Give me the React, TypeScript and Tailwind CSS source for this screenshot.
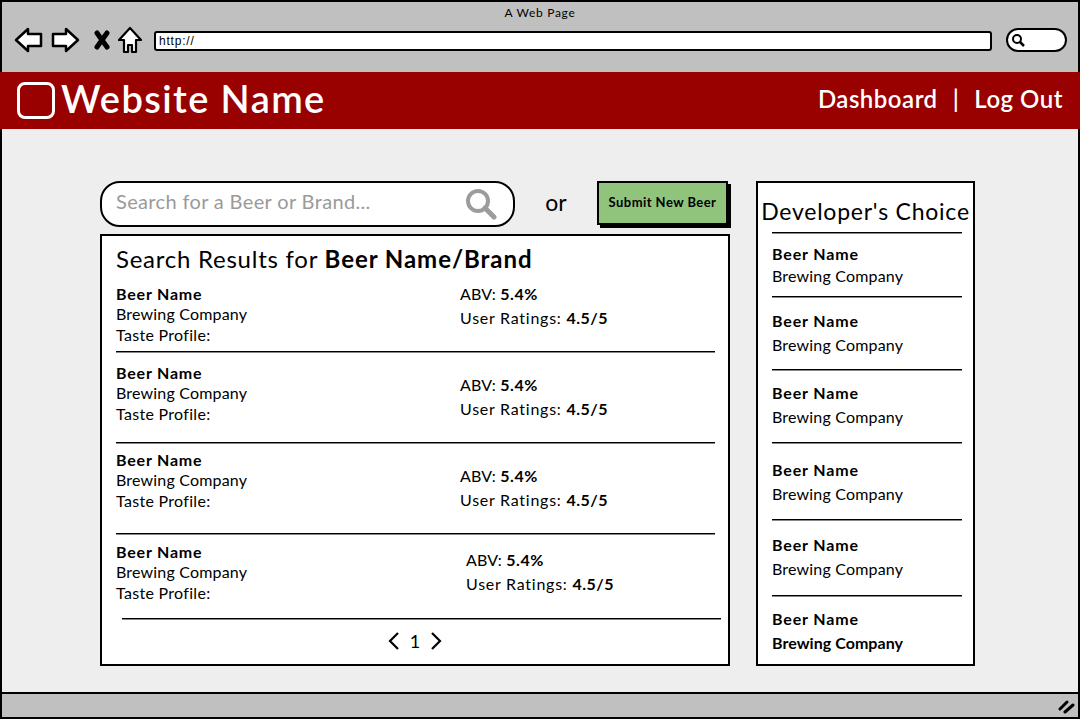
const font = { fontFamily: 'Lato, "Open Sans", sans-serif' };

function BeerRow({ h, pt, rightX, rightPt, line = true, lineX = "ml-[14px] w-[599px]" }: { h: string; pt: string; rightX: string; rightPt: string; line?: boolean; lineX?: string }) {
  return (
    <div className={h + " flex flex-col"}>
      <div className="flex flex-1 min-h-0">
        <div className={pt + " w-[358px] shrink-0 pl-[14px] text-[16px] leading-[20px]"}>
          <div className="font-bold tracking-[0.8px]">Beer Name</div>
          <div className="tracking-[0.18px]">Brewing Company</div>
          <div className="mt-[1px] tracking-[0.3px]">Taste Profile:</div>
        </div>
        <div className={rightPt + " " + rightX + " text-[16px] leading-[20px]"}>
          <div className="tracking-[0.1px]">ABV: <b className="tracking-[0.6px]">5.4%</b></div>
          <div className="mt-[4px] tracking-[0.75px]">User Ratings: <b className="tracking-[0.5px]">4.5/5</b></div>
        </div>
      </div>
      {line && <div className={lineX + " h-[2px] bg-[#888] border-t border-black"} />}
    </div>
  );
}

function Pick({ h, pt, gap, boldCompany = false, line = true }: { h: string; pt: string; gap: string; boldCompany?: boolean; line?: boolean }) {
  return (
    <div className={h + " flex flex-col"}>
      <div className={pt + " flex-1 min-h-0 pl-[14px] text-[16px] leading-[20px]"}>
        <div className="font-bold tracking-[0.85px]">Beer Name</div>
        <div className={gap + (boldCompany ? " font-bold tracking-[0.05px]" : " tracking-[0.18px]")}>Brewing Company</div>
      </div>
      {line && <div className="ml-[14px] w-[190px] h-[2px] bg-[#888] border-t border-black" />}
    </div>
  );
}

export default function App() {
  return (
    <div className="w-[1080px] h-[720px] flex flex-col bg-white text-black overflow-hidden" style={font}>
      <div className="h-[72px] shrink-0 bg-[#c0c0c0] border-t-2 border-x-2 border-black">
        <div className="text-center text-[12px] leading-[16px] pt-[3px] tracking-[0.7px]">A Web Page</div>
        <div className="flex items-center pl-[12px] pr-[11px] mt-[1px] h-[36px]">
          <svg width="30" height="28" viewBox="0 0 30 28" className="shrink-0"><path d="M2 14 L14 3 L14 8 L27 8 L27 20 L14 20 L14 25 Z" fill="#fff" stroke="#000" strokeWidth="2.5" strokeLinejoin="round" /></svg>
          <svg width="30" height="28" viewBox="0 0 30 28" className="shrink-0 ml-[6px]"><path d="M28 14 L16 3 L16 8 L3 8 L3 20 L16 20 L16 25 Z" fill="#fff" stroke="#000" strokeWidth="2.5" strokeLinejoin="round" /></svg>
          <svg width="18" height="20" viewBox="0 0 18 20" className="shrink-0 ml-[13px]"><path d="M4 3 L14 17 M14 3 L4 17" stroke="#000" strokeWidth="5" strokeLinecap="round" /></svg>
          <svg width="24" height="28" viewBox="0 0 24 28" className="shrink-0 ml-[7px]"><path d="M12 2 L23 14 L18 14 L18 26 L14 26 L14 19 L10 19 L10 26 L6 26 L6 14 L1 14 Z" fill="#fff" stroke="#000" strokeWidth="2.2" strokeLinejoin="round" /></svg>
          <div className="ml-[12px] mt-[1px] w-[840px] h-[20px] bg-white border-2 border-black rounded-[3px] flex items-center pl-[3px] text-[12px] tracking-[0.8px]" style={{ fontFamily: '"Liberation Sans", sans-serif' }}>http://</div>
          <div className="ml-[14px] w-[61px] h-[24px] bg-white border-2 border-black rounded-[12px] flex items-center pl-[3px]">
            <svg width="14" height="14" viewBox="0 0 14 14"><circle cx="6" cy="6" r="4" fill="none" stroke="#000" strokeWidth="2" /><path d="M9 9 L13 13" stroke="#000" strokeWidth="2.5" /></svg>
          </div>
        </div>
      </div>
      <div className="h-[57px] shrink-0 bg-[#990000] flex items-center text-white">
        <div className="ml-[17px] w-[38px] h-[37px] border-[3px] border-white rounded-[8px]" />
        <div className="ml-[6px] pb-[5px] text-[38px] leading-[52px] font-semibold tracking-[1.4px]">Website Name</div>
        <div className="ml-auto mr-[17px] pb-[4px] flex items-center text-[24px] font-semibold tracking-[0.5px]">
          <span>Dashboard</span>
          <span className="mx-[15px]">|</span>
          <span>Log Out</span>
        </div>
      </div>
      <div className="flex-1 min-h-0 bg-[#eeeeee] border-x-2 border-black flex pl-[98px] pt-[52px]">
        <div className="w-[630px] shrink-0">
          <div className="flex h-[53px] items-start">
            <div className="w-[415px] h-[46px] bg-white border-2 border-black rounded-[20px] flex items-center pl-[14px] pr-[16px] text-[20px] text-[#9a9a9a] tracking-[0.35px]">
              <span className="pb-[6px]">Search for a Beer or Brand...</span>
              <svg width="32" height="32" viewBox="0 0 32 32" className="ml-auto shrink-0"><circle cx="13" cy="13" r="10" fill="none" stroke="#9c9c9c" strokeWidth="4" /><path d="M20 20 L29 29" stroke="#9c9c9c" strokeWidth="5" strokeLinecap="round" /></svg>
            </div>
            <div className="w-[82px] h-[44px] pb-[2px] flex items-center justify-center text-[23px]">or</div>
            <div className="w-[131px] h-[44px] bg-[#90c47c] border-2 border-black shadow-[3px_3px_0_#000] flex items-center justify-center text-[13px] font-bold tracking-[0.45px]">Submit New Beer</div>
          </div>
          <div className="w-[630px] h-[432px] bg-white border-2 border-black flex flex-col">
            <div className="h-[48px] shrink-0 pl-[14px] pt-[7px] text-[24px] leading-[32px] tracking-[0.75px]">Search Results for <b className="tracking-[0.95px]">Beer Name/Brand</b></div>
            <BeerRow h="h-[69px]" pt="pt-0" rightX="" rightPt="pt-0" />
            <BeerRow h="h-[91px]" pt="pt-[10px]" rightX="" rightPt="pt-[22px]" />
            <BeerRow h="h-[91px]" pt="pt-[6px]" rightX="" rightPt="pt-[22px]" />
            <BeerRow h="h-[85px]" pt="pt-[7px]" rightX="ml-[6px]" rightPt="pt-[15px]" lineX="ml-[20px] w-[599px]" />
            <div className="flex-1 min-h-0 flex items-center justify-center gap-[10px] text-[18px] pb-[2px]">
              <svg width="12" height="18" viewBox="0 0 12 18"><path d="M10 1 L2 9 L10 17" fill="none" stroke="#000" strokeWidth="2.2" /></svg>
              <span>1</span>
              <svg width="12" height="18" viewBox="0 0 12 18"><path d="M2 1 L10 9 L2 17" fill="none" stroke="#000" strokeWidth="2.2" /></svg>
            </div>
          </div>
        </div>
        <div className="ml-[26px] w-[219px] h-[485px] shrink-0 bg-white border-2 border-black flex flex-col">
          <div className="h-[51px] shrink-0 flex flex-col">
            <div className="flex-1 text-center text-[23px] leading-[27px] pt-[15px] tracking-[0.77px] whitespace-nowrap">Developer's Choice</div>
            <div className="ml-[14px] w-[190px] h-[2px] bg-[#888] border-t border-black" />
          </div>
          <Pick h="h-[64px]" pt="pt-[10px]" gap="mt-[2px]" />
          <Pick h="h-[73px]" pt="pt-[13px]" gap="mt-[4px]" />
          <Pick h="h-[73px]" pt="pt-[12px]" gap="mt-[4px]" />
          <Pick h="h-[77px]" pt="pt-[16px]" gap="mt-[4px]" />
          <Pick h="h-[76px]" pt="pt-[14px]" gap="mt-[4px]" />
          <Pick h="h-[67px]" pt="pt-[12px]" gap="mt-[4px]" boldCompany line={false} />
        </div>
      </div>
      <div className="h-[27px] shrink-0 mb-[1px] bg-[#c0c0c0] border-2 border-black flex items-center justify-end pr-[2px]">
        <svg width="18" height="16" viewBox="0 0 18 16"><path d="M2 11 L9 4 M7 14 L15 7" stroke="#000" strokeWidth="3" strokeLinecap="round" /></svg>
      </div>
    </div>
  );
}
